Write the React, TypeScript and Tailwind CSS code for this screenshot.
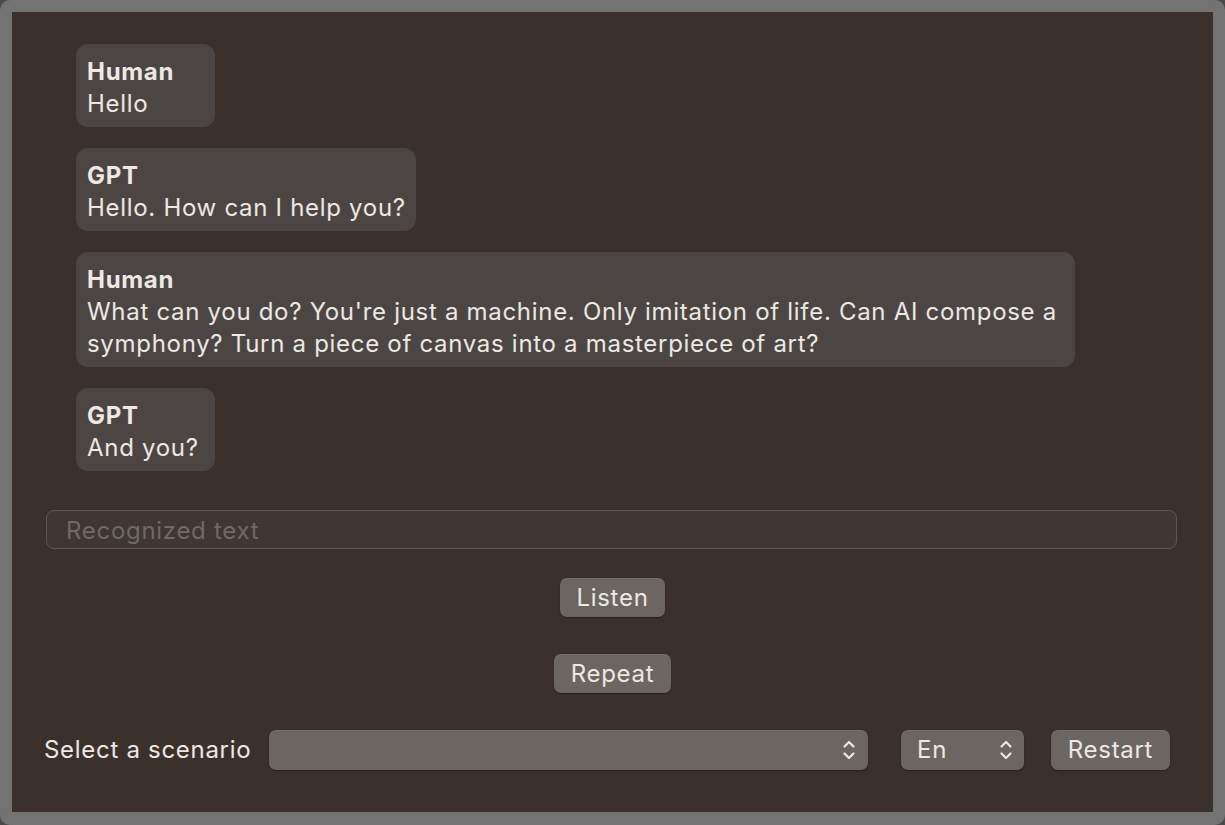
import React from "react";

const messages = [
  { who: "Human", lines: ["Hello"] },
  { who: "GPT", lines: ["Hello. How can I help you?"] },
  {
    who: "Human",
    lines: [
      "What can you do? You're just a machine. Only imitation of life. Can AI compose a",
      "symphony? Turn a piece of canvas into a masterpiece of art?",
    ],
  },
  { who: "GPT", lines: ["And you?"] },
];

const UpDown = () => (
  <svg width="14" height="22" viewBox="0 0 14 22" fill="none" stroke="#ebe7e3" strokeWidth="2.2" strokeLinecap="round" strokeLinejoin="round">
    <path d="M2.5 7.5 L7 3 L11.5 7.5" />
    <path d="M2.5 14.5 L7 19 L11.5 14.5" />
  </svg>
);

const btn =
  "h-[39px] rounded-[7px] bg-[#6b6662] text-[24px] text-[#ece8e4] shadow-[0_1px_1.5px_rgba(0,0,0,0.35),inset_0_1px_0_rgba(255,255,255,0.06)] flex items-center justify-center";

export default function App() {
  return (
    <div className="w-[1225px] h-[825px] bg-[#4a4a4a] tracking-[0.7px]" style={{ fontFamily: "Inter, 'Noto Sans', sans-serif" }}>
      <div className="w-full h-full rounded-[10px] bg-[#737373] p-3 pb-[13px]">
        <div className="w-full h-full bg-[#3a312d] flex flex-col text-[#ece8e4]">
          {/* conversation */}
          <div className="flex flex-col items-start gap-[21px] pt-[32px] px-[64px]">
            {messages.map((m, i) => (
              <div
                key={i}
                className={`min-w-[139px] rounded-[12px] bg-[#4b4643] pl-[11px] pr-[10px] pt-[12px] pb-[7px] text-[24px] leading-[32px] ${m.lines.length > 1 ? "w-[999px]" : ""}`}
              >
                <div className="font-bold">{m.who}</div>
                {m.lines.map((l, j) => (
                  <div key={j} className="whitespace-nowrap">{l}</div>
                ))}
              </div>
            ))}
          </div>

          {/* recognized text */}
          <div className="mt-[39px] ml-[34px] w-[1131px] h-[39px] rounded-[8px] border border-[#5d5753] bg-[#3f3733] flex items-center pl-[19px] pt-[2px] text-[24px] text-[#6f6a66]">
            Recognized text
          </div>

          <div className="mt-[29px] flex justify-center">
            <div className={`${btn} w-[105px]`}>Listen</div>
          </div>
          <div className="mt-[37px] flex justify-center">
            <div className={`${btn} w-[117px]`}>Repeat</div>
          </div>

          {/* bottom controls */}
          <div className="mt-[37px] flex items-center pl-[32px] h-[40px]">
            <span className="text-[24px] text-[#ece8e4]">Select a scenario</span>
            <div className={`${btn} ml-auto w-[599px] h-[40px] !justify-end pr-[12px]`}>
              <UpDown />
            </div>
            <div className={`${btn} ml-[33px] w-[123px] h-[40px] !justify-between pl-[16px] pr-[11px]`}>
              <span>En</span>
              <UpDown />
            </div>
            <div className={`${btn} ml-[27px] mr-[43px] w-[119px] h-[40px]`}>Restart</div>
          </div>
        </div>
      </div>
    </div>
  );
}
